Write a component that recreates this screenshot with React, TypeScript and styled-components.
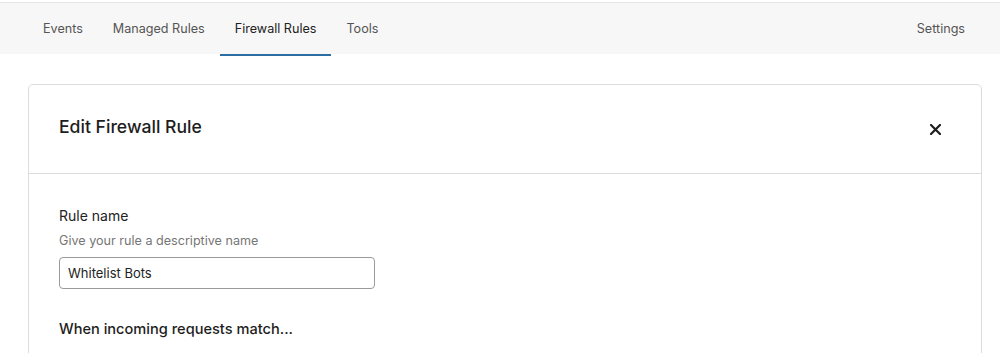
import styled, { createGlobalStyle } from 'styled-components';

const GlobalStyle = createGlobalStyle`
  html, body {
    margin: 0;
    padding: 0;
    background: #ffffff;
    font-family: "Inter", "Liberation Sans", Arial, sans-serif;
    -webkit-font-smoothing: antialiased;
  }
`;

const Page = styled.div`
  width: 1000px;
  height: 353px;
  overflow: hidden;
`;

const NavBar = styled.nav`
  display: flex;
  align-items: stretch;
  height: 51px;
  margin-top: 2px;
  border-top: 1px solid #e6e6e6;
  background-color: #f7f7f7;
  padding: 0 20px 0 28px;
`;

const Tabs = styled.div`
  display: flex;
  flex: 1;
`;

const Tab = styled.a<{ active?: boolean }>`
  display: flex;
  align-items: center;
  padding: 0 15px;
  margin-bottom: -2px;
  font-size: 12.6px;
  color: ${p => (p.active ? '#222222' : '#555555')};
  border-bottom: 2px solid ${p => (p.active ? '#2c6ea3' : 'transparent')};
  cursor: pointer;
  text-decoration: none;
`;

const Content = styled.main`
  padding: 30px 20px 0 28px;
`;

const Card = styled.section`
  width: 952px;
  border: 1px solid #dcdcdc;
  border-radius: 5px;
  background: #ffffff;
`;

const CardHeader = styled.header`
  display: flex;
  align-items: center;
  justify-content: space-between;
  height: 88px;
  padding: 0 38px 0 30px;
  border-bottom: 1px solid #dcdcdc;
`;

const Title = styled.h2`
  margin: 0 0 5px;
  font-size: 17.6px;
  font-weight: 500;
  color: #1d1d1d;
`;

const CloseButton = styled.button`
  display: flex;
  align-items: center;
  justify-content: center;
  width: 16px;
  height: 16px;
  padding: 0;
  margin-top: 1px;
  border: none;
  background: none;
  cursor: pointer;
`;

const CardBody = styled.div`
  padding: 33px 30px 40px;
`;

const Label = styled.div`
  font-size: 14px;
  color: #222222;
  line-height: 18px;
`;

const Hint = styled.div`
  margin-top: 8px;
  font-size: 12.6px;
  color: #767676;
  line-height: 16px;
`;

const TextInput = styled.input`
  box-sizing: border-box;
  display: block;
  width: 316px;
  height: 32px;
  margin-top: 8px;
  padding: 0 8px;
  border: 1px solid #9a9a9a;
  border-radius: 4px;
  font-family: inherit;
  font-size: 13px;
  color: #222222;
  outline: none;
`;

const SectionTitle = styled.h3`
  margin: 31px 0 0;
  font-size: 14.6px;
  font-weight: 500;
  color: #1d1d1d;
`;

export default function App() {
  const tabs = ['Events', 'Managed Rules', 'Firewall Rules', 'Tools'];
  return (
    <Page>
      <GlobalStyle />
      <NavBar>
        <Tabs>
          {tabs.map(t => (
            <Tab key={t} active={t === 'Firewall Rules'}>{t}</Tab>
          ))}
        </Tabs>
        <Tab>Settings</Tab>
      </NavBar>
      <Content>
        <Card>
          <CardHeader>
            <Title>Edit Firewall Rule</Title>
            <CloseButton aria-label="Close">
              <svg width="11" height="11" viewBox="0 0 11 11">
                <path d="M1 1L10 10M10 1L1 10" stroke="#1d1d1d" strokeWidth="2.2" strokeLinecap="square" />
              </svg>
            </CloseButton>
          </CardHeader>
          <CardBody>
            <Label>Rule name</Label>
            <Hint>Give your rule a descriptive name</Hint>
            <TextInput defaultValue="Whitelist Bots" />
            <SectionTitle>When incoming requests match...</SectionTitle>
          </CardBody>
        </Card>
      </Content>
    </Page>
  );
}
